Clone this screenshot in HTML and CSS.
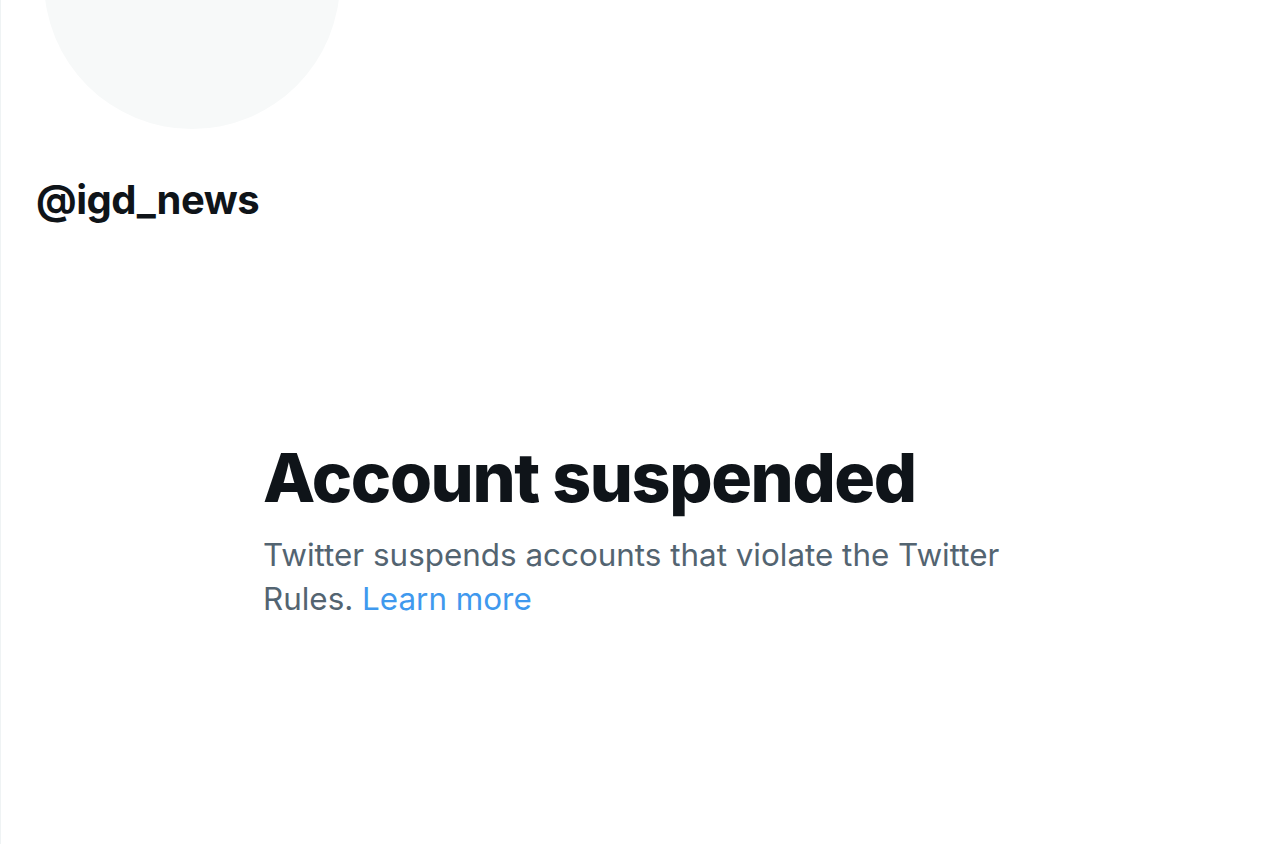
FILE: index.html
```html
<!DOCTYPE html>
<html lang="en">
<head>
    <meta charset="UTF-8">
    <meta name="viewport" content="width=device-width, initial-scale=1.0">
    <title>@igd_news / Twitter</title>
    <link rel="stylesheet" href="styles.css">
</head>
<body>
    <div class="profile">
        <div class="avatar"></div>
        <h2 class="handle">@igd_news</h2>

        <div class="notice">
            <h1>Account suspended</h1>
            <p>Twitter suspends accounts that violate the Twitter Rules. <a href="#">Learn more</a></p>
        </div>
    </div>
</body>
</html>
```

FILE: styles.css
```css
body {
    font-family: Inter, "Noto Sans", sans-serif;
    margin: 0;
    padding: 0;
    background-color: #ffffff;
    color: #0f1419;
    overflow: hidden;
}
.profile {
    display: flex;
    flex-direction: column;
    align-items: flex-start;
    min-height: 100vh;
    border-left: 1px solid #eff3f4;
    padding-left: 35px;
    box-sizing: border-box;
}
.avatar {
    width: 296px;
    height: 296px;
    margin-top: -167px;
    margin-left: 8px;
    border-radius: 50%;
    background-color: #f7f9f9;
    flex-shrink: 0;
}
.handle {
    margin: 45px 0 0 0;
    font-size: 40px;
    font-weight: 700;
    line-height: 52px;
    letter-spacing: -0.5px;
}
.notice {
    margin: 211px 0 0 227px;
    max-width: 750px;
}
.notice h1 {
    margin: 0;
    font-size: 68px;
    font-weight: 800;
    line-height: 80px;
    letter-spacing: -1.4px;
}
.notice p {
    margin: 16px 0 0 0;
    font-size: 31.4px;
    line-height: 44px;
    color: #536471;
}
.notice a {
    color: #3f99ee;
    text-decoration: none;
}
```
